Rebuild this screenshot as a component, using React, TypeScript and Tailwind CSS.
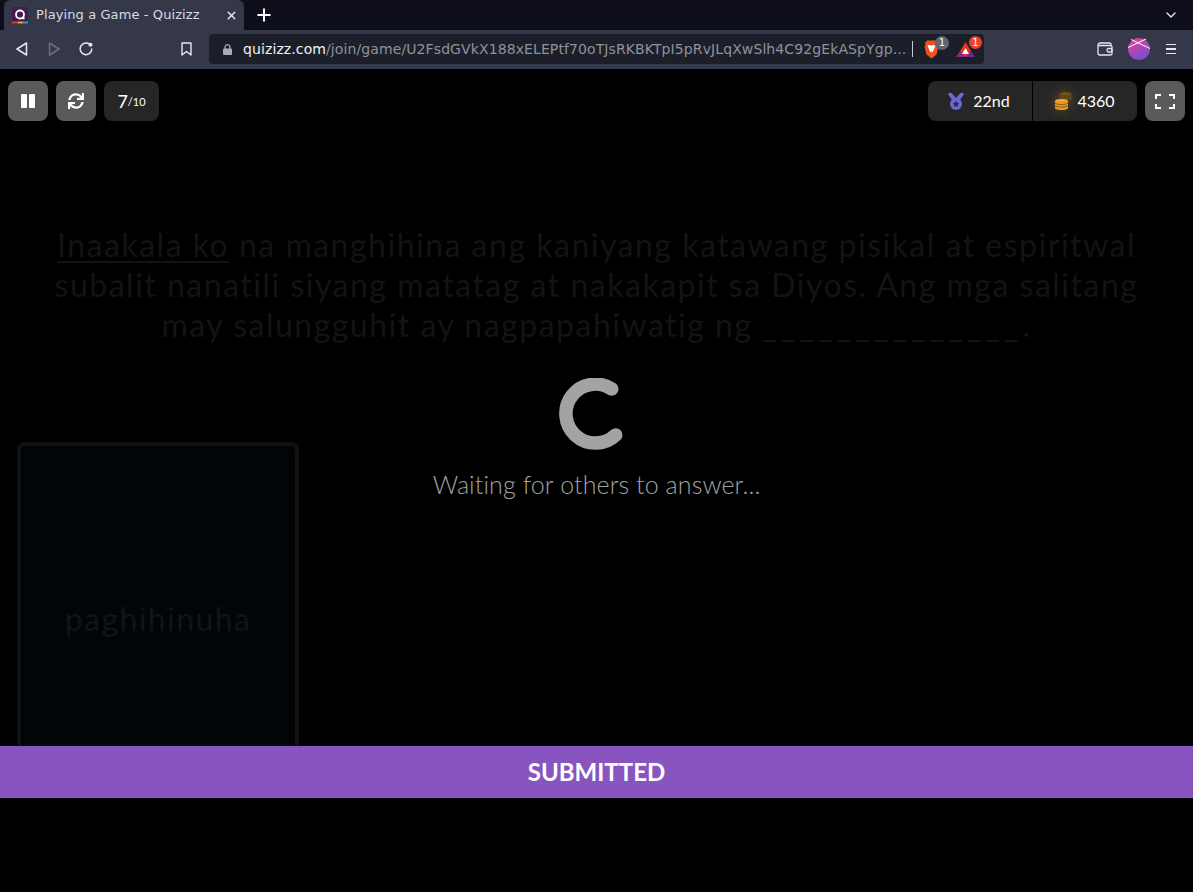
import { ChevronDown, Plus, X } from "lucide-react"
import { FaSync } from "react-icons/fa"

const chromeFont = "font-['DejaVu_Sans',sans-serif]"
const gameFont = "font-['Lato',sans-serif]"

function QuizizzFavicon() {
    return (
        <svg width="16" height="17" viewBox="0 0 16 17">
            <rect width="16" height="17" rx="2.500" fill="#461a4f" />
            <rect y="14.500" width="6" height="2" fill="#e8384f" />
            <rect x="6" y="14.500" width="5" height="2" fill="#f5a623" />
            <rect x="11" y="14.500" width="5" height="2" fill="#2d9cdb" />
            <circle cx="8" cy="7.500" r="4" fill="none" stroke="#fff" strokeWidth="1.800" />
            <rect x="10" y="10.200" width="2.600" height="2" fill="#fff" />
        </svg>
    )
}

function BraveIcon() {
    return (
        <svg width="15" height="19" viewBox="0 0 15 19">
            <path d="M3 .5h9l2 2.500-.5 2 1 1.500-2 8L7.500 18.500 2.500 14.500l-2-8 1-1.500L1 3z" fill="#f0501e" />
            <path d="M3.500 5.500l2.500-.5 1.500.8L9 5l2.500.5L10 9l-1 2.500-1.500 1.500L6 11.500 5 9z" fill="#fff" />
            <path d="M6.300 11.500h2.400L7.500 12.800z" fill="#f0501e" />
        </svg>
    )
}

function RewardsIcon() {
    return (
        <svg width="19" height="17" viewBox="0 0 19 17">
            <path d="M9.500 1L18.500 16H.5z" fill="#e8351f" />
            <path d="M.5 16L4.500 9.500 9.500 16z" fill="#8a2a8c" />
            <path d="M18.500 16L14.500 9.500 9.500 16z" fill="#6b2a9c" />
            <path d="M9.500 7l3.500 6H6z" fill="#fff" />
        </svg>
    )
}

function WalletIcon() {
    return (
        <svg width="16" height="14" viewBox="0 0 16 14" fill="none" stroke="#e5e7eb" strokeWidth="1.300">
            <path d="M14 3.500V2.200C14 1.500 13.500 1 12.800 1H3C1.900 1 1 1.900 1 3v8c0 1.100.9 2 2 2h10.500c.8 0 1.500-.7 1.500-1.500V5c0-.8-.7-1.500-1.500-1.500H1.500" />
            <rect x="10" y="6.500" width="5" height="3.500" rx="1.500" />
        </svg>
    )
}

function ProfileAvatar() {
    return (
        <svg width="22" height="22" viewBox="0 0 22 22">
            <defs>
                <linearGradient id="avatarFill" x1="0.2" y1="0" x2="0.8" y2="1">
                    <stop offset="0" stopColor="#ea3f96" />
                    <stop offset="1" stopColor="#6a50d8" />
                </linearGradient>
            </defs>
            <circle cx="11" cy="11" r="11" fill="url(#avatarFill)" />
            <path d="M3 1.500L22 10.500M0 9.500L18 1" stroke="#fff" strokeWidth="1" fill="none" />
        </svg>
    )
}

function ReloadIcon() {
    return (
        <svg width="14" height="14" viewBox="0 0 14 14" fill="none" className="ml-[19px]">
            <path d="M10.500 2.200A5.800 5.800 0 1 0 12.800 7" stroke="#e5e7eb" strokeWidth="1.500" strokeLinecap="round" />
            <circle cx="11.500" cy="2.800" r="2" fill="#e5e7eb" />
        </svg>
    )
}

function LockIcon() {
    return (
        <svg width="9" height="11" viewBox="0 0 9 11" className="shrink-0">
            <path d="M2 5V3.200a2.500 2.500 0 0 1 5 0V5" fill="none" stroke="#a9acb5" strokeWidth="1.200" />
            <rect y="4.500" width="9" height="6.500" rx="1" fill="#a9acb5" />
        </svg>
    )
}

function MedalIcon() {
    return (
        <svg width="16" height="17" viewBox="0 0 16 17">
            <path d="M0 0h3.500L8 5l4.500-5H16l-1 3-4 5H5L1 3z" fill="#6f66d4" />
            <circle cx="8" cy="11" r="6" fill="#6f66d4" />
            <path d="M8 7.700l1 2.100 2.300.3-1.700 1.600.4 2.300-2-1.100-2 1.100.4-2.300-1.700-1.600 2.300-.3z" fill="#2b2a4a" />
        </svg>
    )
}

function CoinsIcon() {
    return (
        <svg width="17" height="18" viewBox="0 0 17 18" className="drop-shadow-[0_0_6px_rgba(245,166,35,0.3)]">
            <ellipse cx="10.500" cy="2.500" rx="6" ry="2.200" fill="#7a5a1c" />
            <rect x="4.500" y="2.500" width="12" height="5.500" fill="#5f4718" />
            <ellipse cx="6.500" cy="9" rx="6.500" ry="2" fill="#f5ad2e" />
            <rect y="9" width="13" height="7" fill="#e89a1c" />
            <ellipse cx="6.500" cy="16" rx="6.500" ry="2" fill="#e89a1c" />
            <path d="M0 11.300c1.500 1.600 11.500 1.600 13 0M0 13.800c1.500 1.600 11.500 1.600 13 0" stroke="#7f5410" strokeWidth="0.900" fill="none" />
        </svg>
    )
}

function BrowserChrome() {
    return (
        <div className={`shrink-0 ${chromeFont}`}>
            <div className="flex h-[30px] items-end bg-[#0d0e1a] pl-1">
                <div className="flex h-[30px] w-[240px] items-center rounded-t-md bg-[#343849] pl-2 pr-[6px]">
                    <QuizizzFavicon />
                    <span className="ml-2 flex-1 text-[13px] tracking-[0.1px] text-[#d9dbe2]">Playing a Game - Quizizz</span>
                    <X size={13} strokeWidth={2.500} className="text-[#e5e7eb]" />
                </div>
                <Plus size={20} strokeWidth={2.400} className="mb-[5px] ml-[10px] text-white" />
                <ChevronDown size={16} strokeWidth={2} className="mb-[7px] ml-auto mr-[14px] text-[#e5e7eb]" />
            </div>
            <div className="flex h-[39px] items-center bg-[#343849] pb-px pl-[16px] pr-[17px]">
                <svg width="12" height="14" viewBox="0 0 12 14" fill="none" stroke="#e5e7eb" strokeWidth="1.500" strokeLinejoin="round">
                    <path d="M10.500 1L1 7l9.500 6z" />
                </svg>
                <svg width="12" height="14" viewBox="0 0 12 14" fill="none" stroke="#6b7080" strokeWidth="1.500" strokeLinejoin="round" className="ml-[20px]">
                    <path d="M1.500 1L11 7l-9.500 6z" />
                </svg>
                <ReloadIcon />
                <svg width="11" height="14" viewBox="0 0 11 14" fill="none" stroke="#e5e7eb" strokeWidth="1.400" strokeLinejoin="round" className="ml-[88px]">
                    <path d="M1 1h9v12L5.500 9.500 1 13z" />
                </svg>
                <div className="ml-[17px] flex h-[30px] w-[775px] items-center rounded bg-[#1c1f29] pl-[14px]">
                    <LockIcon />
                    <span className="ml-[11px] w-[664px] overflow-hidden whitespace-nowrap text-[14px] tracking-[0.1px] text-[#8f929b]">
                        <span className="text-[#f2f3f5]">quizizz.com</span>/join/game/U2FsdGVkX188xELEPtf70oTJsRKBKTpI5pRvJLqXwSlh4C92gEkASpYgp...
                    </span>
                    <div className="ml-[5px] h-[16px] w-px bg-[#c8cad0]" />
                    <div className="relative ml-[11px] flex">
                        <BraveIcon />
                        <span className="absolute -right-[10px] -top-[4px] flex h-[14px] w-[14px] items-center justify-center rounded-full bg-[#5f6372] text-[10px] text-white">1</span>
                    </div>
                    <div className="relative ml-[17px] flex">
                        <RewardsIcon />
                        <span className="absolute -right-[7px] -top-[5px] flex h-[13px] w-[13px] items-center justify-center rounded-full bg-[#f0402a] text-[10px] text-white">1</span>
                    </div>
                </div>
                <div className="ml-auto flex items-center">
                    <WalletIcon />
                    <div className="ml-[15px] flex">
                        <ProfileAvatar />
                    </div>
                    <div className="ml-[16px] flex w-[10px] flex-col gap-[3px]">
                        <div className="h-[1.500px] bg-[#e5e7eb]" />
                        <div className="h-[1.500px] bg-[#e5e7eb]" />
                        <div className="h-[1.500px] bg-[#e5e7eb]" />
                    </div>
                </div>
            </div>
        </div>
    )
}

function GameHeader() {
    return (
        <div className="flex h-[40px] items-stretch px-2">
            <button className="flex w-[40px] items-center justify-center gap-[2px] rounded-lg bg-[#5a5a5a]">
                <span className="h-[14px] w-[6px] rounded-[1px] bg-white" />
                <span className="h-[14px] w-[6px] rounded-[1px] bg-white" />
            </button>
            <button className="ml-2 flex w-[40px] items-center justify-center rounded-lg bg-[#5a5a5a]">
                <FaSync size={16} className="text-white" />
            </button>
            <div className={`ml-2 flex w-[55px] items-center justify-center rounded-lg bg-[#262626] text-white ${gameFont}`}>
                <span className="text-[18px]">7</span>
                <span className="mt-[2px] text-[11px]">/10</span>
            </div>
            <div className={`ml-auto flex rounded-lg bg-[#262626] text-[16px] text-white ${gameFont}`}>
                <div className="flex w-[105px] items-center justify-center gap-[9px] border-r border-black pr-[2px]">
                    <MedalIcon />
                    <span>22nd</span>
                </div>
                <div className="flex w-[104px] items-center justify-center gap-[5px]">
                    <CoinsIcon />
                    <span>4360</span>
                </div>
            </div>
            <button className="ml-2 flex w-[40px] items-center justify-center rounded-lg bg-[#5a5a5a]">
                <svg width="20" height="15" viewBox="0 0 20 15" fill="none" stroke="#fff" strokeWidth="2">
                    <path d="M6 1H1v4M14 1h5v4M6 14H1v-4M14 14h5v-4" />
                </svg>
            </button>
        </div>
    )
}

export default function App() {
    return (
        <div className="flex h-[892px] w-full flex-col overflow-hidden bg-black">
            <BrowserChrome />
            <div className="relative flex-1">
                <div className="flex h-[677px] flex-col pt-3">
                    <GameHeader />
                    <div className={`mt-[104px] text-center text-[32px] leading-[40px] tracking-[1.500px] text-[#131313] ${gameFont}`}>
                        <div className="whitespace-nowrap"><span className="underline decoration-2 underline-offset-4">Inaakala ko</span> na manghihina ang kaniyang katawang pisikal at espiritwal</div>
                        <div className="whitespace-nowrap">subalit nanatili siyang matatag at nakakapit sa Diyos. Ang mga salitang</div>
                        <div className="whitespace-nowrap">may salungguhit ay nagpapahiwatig ng <span className="tracking-[3.900px]">______________</span>.</div>
                    </div>
                    <div className="mt-[97px] flex flex-1 px-[17px]">
                        <div className="flex w-[282px] items-center justify-center rounded-t-lg border-x-4 border-t-4 border-[#111111] bg-[#020508] pt-[45px]">
                            <span className={`text-[32px] tracking-[1.400px] text-[#131313] ${gameFont}`}>paghihinuha</span>
                        </div>
                    </div>
                </div>
                <div className={`flex h-[52px] items-center justify-center bg-[#8854c0] text-[24px] font-bold text-white ${gameFont}`}>
                    SUBMITTED
                </div>
                <div className="absolute left-0 right-0 top-[309px] flex flex-col items-center">
                    <svg width="74" height="74" viewBox="0 0 74 74" fill="none" className="mr-[1px]">
                        <path d="M52.700 11A29.500 29.500 0 1 0 56.700 57" stroke="#a3a3a3" strokeWidth="13.500" strokeLinecap="round" />
                    </svg>
                    <div className={`mt-[16px] text-[25px] font-light leading-[32px] tracking-[0.100px] text-[#a3a3a3] ${gameFont}`}>Waiting for others to answer...</div>
                </div>
            </div>
        </div>
    )
}
